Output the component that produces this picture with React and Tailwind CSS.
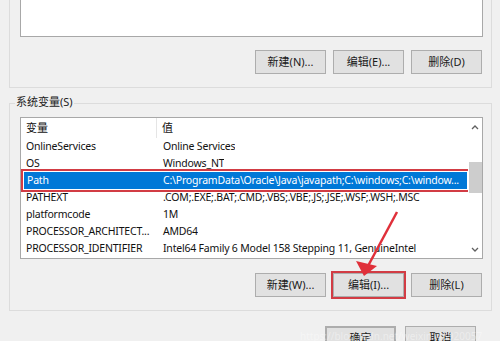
import React from "react";

const rows = [
  { name: "OnlineServices", value: "Online Services" },
  { name: "OS", value: "Windows_NT" },
  {
    name: "Path",
    value: "C:\\ProgramData\\Oracle\\Java\\javapath;C:\\windows;C:\\window...",
    selected: true,
  },
  { name: "PATHEXT", value: ".COM;.EXE;.BAT;.CMD;.VBS;.VBE;.JS;.JSE;.WSF;.WSH;.MSC" },
  { name: "platformcode", value: "1M" },
  { name: "PROCESSOR_ARCHITECT...", value: "AMD64" },
  { name: "PROCESSOR_IDENTIFIER", value: "Intel64 Family 6 Model 158 Stepping 11, GenuineIntel" },
];

const Btn = ({ children, className = "" }) => (
  <button
    className={`w-[71px] h-[24px] bg-[#e1e1e1] border border-[#adadad] text-[11px] text-[#1a1a1a] flex items-center justify-center ${className}`}
  >
    {children}
  </button>
);

const App = () => {
  return (
    <div
      className="relative w-[500px] h-[341px] overflow-hidden bg-[#f0f0f0] text-[#111]"
      style={{ fontFamily: "'Noto Sans', 'Noto Sans CJK SC', sans-serif" }}
    >
      {/* user variables group (top cut off) */}
      <div className="ml-[9px] w-[483px] h-[88px] border border-t-0 border-[#dcdcdc] pl-[10px] pr-[9px]">
        <div className="w-[463px] h-[37px] bg-white border border-t-0 border-[#a8a8a8]" />
        <div className="flex justify-end gap-[7px] mt-[13px]">
          <Btn>新建(N)...</Btn>
          <Btn>编辑(E)...</Btn>
          <Btn>删除(D)</Btn>
        </div>
      </div>

      {/* system variables */}
      <div className="relative ml-[9px] mt-[15px] w-[483px] h-[208px] border border-[#dcdcdc] pl-[10px] pr-[9px] pt-[13px]">
        <div className="absolute left-[5px] top-[-9px] px-[1px] bg-[#f0f0f0] text-[11px] leading-[14px] text-[#222]">
          系统变量(S)
        </div>
        <div className="w-[463px] h-[142px] bg-white border border-[#a8a8a8] flex overflow-hidden">
          <div className="w-[447px] text-[10.5px] tracking-[-0.2px]">
            <div className="flex h-[20px] items-center text-[11px] tracking-normal">
              <div className="w-[136px] pl-[5px] h-full flex items-center border-r border-[#e5e5e5]">变量</div>
              <div className="pl-[5px]">值</div>
            </div>
            {rows.map((r) => (
              <div
                key={r.name}
                className={`flex h-[17px] items-center whitespace-nowrap ${
                  r.selected
                    ? "bg-[#0078d7] text-white outline-2 outline-[#d23c44] outline-offset-[1px] ml-[3px] mr-[1px]"
                    : ""
                }`}
              >
                <div className={`${r.selected ? "w-[133px] pl-[3px]" : "w-[136px] pl-[5px]"} shrink-0`}>{r.name}</div>
                <div className="pl-[6px] overflow-hidden">{r.value}</div>
              </div>
            ))}
          </div>
          <div className="w-[14px] flex flex-col items-center bg-white">
            <svg width="8" height="6" viewBox="0 0 8 6" className="mt-[6px]">
              <path d="M1 5 L4 2 L7 5" fill="none" stroke="#606060" strokeWidth="1.3" />
            </svg>
            <div className="mt-[32px] w-[13px] h-[31px] bg-[#cdcdcd]" />
            <div className="flex-1" />
            <svg width="8" height="6" viewBox="0 0 8 6" className="mb-[5px]">
              <path d="M1 1 L4 4 L7 1" fill="none" stroke="#606060" strokeWidth="1.3" />
            </svg>
          </div>
        </div>
        <div className="flex justify-end gap-[7px] mt-[14px]">
          <Btn>新建(W)...</Btn>
          <Btn className="outline-2 outline-[#d23c44] outline-offset-0">编辑(I)...</Btn>
          <Btn>删除(L)</Btn>
        </div>
      </div>

      <div className="flex justify-end gap-[9px] mt-[15px] pr-[24px]">
        <Btn className="w-[69px] border-[#0078d7] border-2">确定</Btn>
        <Btn className="w-[69px]">取消</Btn>
      </div>

      <div className="absolute left-[300px] top-[329px] text-[10px] text-white/40 whitespace-nowrap">
        https://blog.csdn.net/weixin_43920057
      </div>

      {/* red arrow annotation */}
      <svg className="absolute left-0 top-0 pointer-events-none" width="500" height="341">
        <line x1="397" y1="212" x2="368" y2="266" stroke="#e0303a" strokeWidth="2.5" />
        <polygon points="364,276 356,261 377,266" fill="#e0303a" />
      </svg>
    </div>
  );
};

export default App;
